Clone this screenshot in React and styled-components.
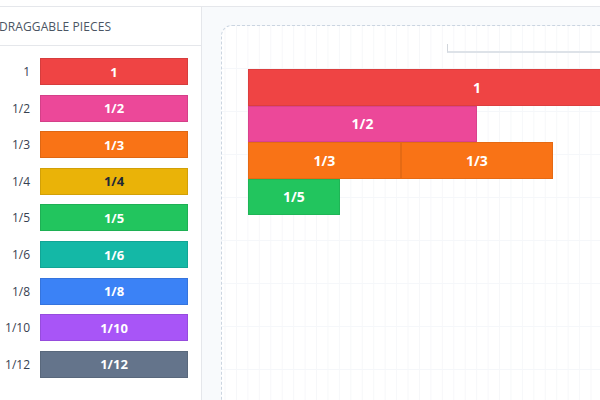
import React from 'react';
import styled, { createGlobalStyle } from 'styled-components';

const GlobalStyle = createGlobalStyle`
  html, body { margin: 0; padding: 0; background: #ffffff; }
  body { font-family: 'Open Sans', 'Liberation Sans', sans-serif; overflow: hidden; }
`;

const pieces = [
  { label: '1', color: '#ef4444', text: '#ffffff' },
  { label: '1/2', color: '#ec4899', text: '#ffffff' },
  { label: '1/3', color: '#f97316', text: '#ffffff' },
  { label: '1/4', color: '#eab308', text: '#1f2937' },
  { label: '1/5', color: '#22c55e', text: '#ffffff' },
  { label: '1/6', color: '#14b8a6', text: '#ffffff' },
  { label: '1/8', color: '#3b82f6', text: '#ffffff' },
  { label: '1/10', color: '#a855f7', text: '#ffffff' },
  { label: '1/12', color: '#64748b', text: '#ffffff' },
];

const WHOLE = 458;

const board = [
  [{ label: '1', size: 1, color: '#ef4444' }],
  [{ label: '1/2', size: 1 / 2, color: '#ec4899' }],
  [
    { label: '1/3', size: 1 / 3, color: '#f97316' },
    { label: '1/3', size: 1 / 3, color: '#f97316' },
  ],
  [{ label: '1/5', size: 1 / 5, color: '#22c55e' }],
];

const Page = styled.div`
  height: 400px;
  display: flex;
  flex-direction: column;
  overflow: hidden;
`;

const TopBar = styled.div`
  height: 6px;
  flex-shrink: 0;
  border-bottom: 1px solid #e5e7eb;
  background: #ffffff;
`;

const Main = styled.div`
  flex: 1;
  display: flex;
  min-height: 0;
`;

const Sidebar = styled.aside`
  width: 201px;
  flex-shrink: 0;
  background: #ffffff;
  border-right: 1px solid #e5e7eb;
  display: flex;
  flex-direction: column;
`;

const SideHeader = styled.div`
  height: 38px;
  border-bottom: 1px solid #e5e7eb;
  display: flex;
  align-items: center;
  font-size: 12px;
  font-weight: 400;
  letter-spacing: 0.1px;
  color: #4b5563;
  text-transform: uppercase;
  margin-left: -1px;
`;

const PieceList = styled.div`
  padding-top: 12px;
  display: flex;
  flex-direction: column;
  gap: 9.62px;
`;

const PieceRow = styled.div`
  display: grid;
  grid-template-columns: 30px 148px;
  column-gap: 10px;
  align-items: center;
`;

const RowLabel = styled.span`
  text-align: right;
  font-size: 12px;
  color: #374151;
`;

const Chip = styled.div`
  height: 27px;
  box-sizing: border-box;
  background: ${(p) => p.$color};
  color: ${(p) => p.$text};
  border: 1px solid rgba(0, 0, 0, 0.1);
  display: flex;
  align-items: center;
  justify-content: center;
  font-size: 13px;
  font-weight: 700;
`;

const Stage = styled.main`
  flex: 1;
  background: #f8fafc;
  padding: 18px 0 0 19px;
  overflow: hidden;
  min-width: 0;
`;

const Board = styled.div`
  width: 520px;
  height: 480px;
  border: 1.5px dashed #cbd5e1;
  border-radius: 11px;
  padding: 18px 0 0 26px;
  background-color: #ffffff;
  background-image:
    linear-gradient(to bottom, transparent 42px, #f5f7fa 42px, #f5f7fa 43px),
    linear-gradient(to right, transparent 10.45px, #f6f7f9 10.45px, #f6f7f9 11.45px);
  background-size: 100% 43px, 11.45px 100%;
  background-position: 0 0, 3.5px 0;
`;

const Ruler = styled.div`
  margin-left: 199px;
  height: 7px;
  border-left: 1px solid #d1d5db;
  border-bottom: 2px solid #dde2e8;
  margin-bottom: 16px;
`;

const Track = styled.div`
  display: flex;
  height: 36.5px;
`;

const Block = styled.div`
  height: 100%;
  box-sizing: border-box;
  flex-shrink: 0;
  background: ${(p) => p.$color};
  border: 1px solid rgba(0, 0, 0, 0.08);
  color: #ffffff;
  display: flex;
  align-items: center;
  justify-content: center;
  font-size: 14px;
  font-weight: 700;
`;

export default function App() {
  return (
    <Page>
      <GlobalStyle />
      <TopBar />
      <Main>
        <Sidebar>
          <SideHeader>Draggable pieces</SideHeader>
          <PieceList>
            {pieces.map((p) => (
              <PieceRow key={p.label}>
                <RowLabel>{p.label}</RowLabel>
                <Chip $color={p.color} $text={p.text}>{p.label}</Chip>
              </PieceRow>
            ))}
          </PieceList>
        </Sidebar>
        <Stage>
          <Board>
            <Ruler />
            {board.map((row, i) => (
              <Track key={i}>
                {row.map((b, j) => (
                  <Block key={j} $color={b.color} style={{ width: WHOLE * b.size }}>
                    {b.label}
                  </Block>
                ))}
              </Track>
            ))}
          </Board>
        </Stage>
      </Main>
    </Page>
  );
}
